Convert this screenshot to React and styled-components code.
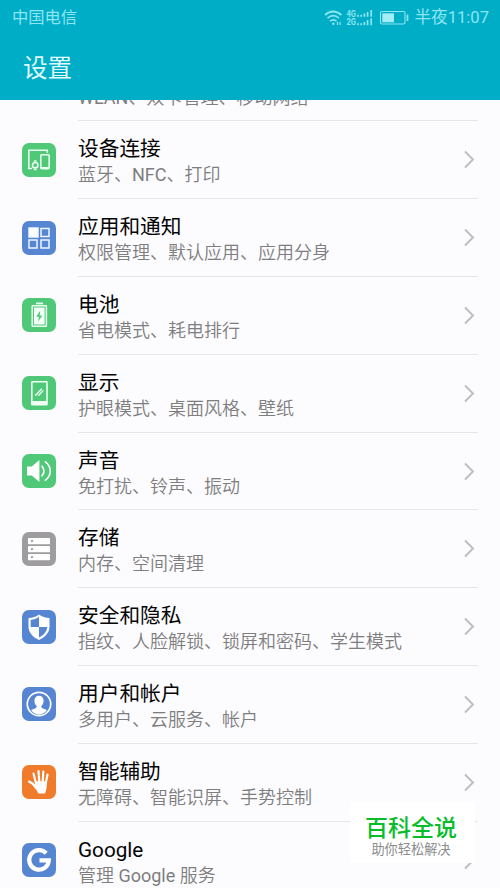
import styled, { createGlobalStyle } from "styled-components"

const GlobalStyle = createGlobalStyle`
    body {
        margin: 0;
        background: #fcfbfe;
        font-family: Roboto, "Noto Sans CJK SC", sans-serif;
    }
`;
const Screen = styled.div`
    width: 500px;
    height: 888px;
    overflow: hidden;
    background: #fcfbfe;
    display: flex;
    flex-direction: column;
    position: relative;
`;
const Header = styled.header`
    height: 100px;
    flex-shrink: 0;
    background: #00adc6;
    box-sizing: border-box;
`;
const StatusBar = styled.div`
    height: 35px;
    padding: 0 11px 0 12px;
    display: flex;
    align-items: center;
    justify-content: space-between;
    color: #8ce6f3;
`;
const Carrier = styled.span`
    font-size: 16.3px;
    line-height: 34px;
`;
const StatusIcons = styled.div`
    display: flex;
    align-items: center;
`;
const Clock = styled.span`
    font-size: 16.6px;
    line-height: 34px;
    margin-left: 4px;
    white-space: nowrap;
`;
const Title = styled.h1`
    margin: 0;
    padding-left: 23px;
    font-size: 24.6px;
    font-weight: 400;
    line-height: 67px;
    color: #dffbff;
`;
const Viewport = styled.main`
    flex: 1;
    min-height: 0;
    overflow: hidden;
`;
const List = styled.ul`
    list-style: none;
    margin: 0;
    padding: 0;
`;
const Row = styled.li`
    height: 77.8px;
    padding: 0 22px;
    display: flex;
`;
const IconBox = styled.div`
    width: 34px;
    height: 34px;
    margin: 21.4px 22px 0 0;
    flex-shrink: 0;
    border-radius: 7px;
    background: ${props => props.$color};

    svg {
        display: block;
    }
`;
const Content = styled.div`
    flex: 1;
    display: flex;
    justify-content: space-between;
    box-sizing: border-box;
    border-bottom: 1px solid #e6e5e8;
`;
const Name = styled.div`
    margin-top: 13px;
    font-size: 20.7px;
    line-height: 30px;
    color: #050505;
    white-space: nowrap;
`;
const Summary = styled.div`
    margin-top: -1px;
    font-family: Roboto, "Noto Sans CJK SC DemiLight", "Noto Sans CJK SC", sans-serif;
    font-size: 18px;
    line-height: 24px;
    color: #7e7e7e;
    white-space: nowrap;
`;
// tail of the entry that is scrolled under the header
const ScrolledRow = styled.li`
    height: 21.4px;
    box-sizing: border-box;
    margin: 0 22px 0 78px;
    display: flex;
    align-items: flex-start;
    border-bottom: 1px solid #e6e5e8;

    ${Summary} {
        margin-top: -14.4px;
    }
`;
const Arrow = styled.svg`
    flex-shrink: 0;
    margin: 29px 3px 0 0;
`;
const Badge = styled.div`
    position: absolute;
    left: 350px;
    top: 802px;
    width: 125px;
    height: 61px;
    background: #fff;
    text-align: center;
`;
const BadgeName = styled.div`
    margin: 13px 3px 0 0;
    font-size: 23px;
    font-weight: 500;
    line-height: 28px;
    color: #08bd2b;
`;
const BadgeText = styled.div`
    margin-right: 3px;
    font-size: 13.2px;
    line-height: 14px;
    color: #8b8b8b;
`;

const GREEN = "#4fc878";
const BLUE = "#5685d2";
const GREY = "#9e9c9e";
const ORANGE = "#f07b2a";

const items = [
    {
        name: "设备连接", summary: "蓝牙、NFC、打印", color: GREEN,
        icon: (
            <g fill="none" stroke="#e9fff0" strokeWidth="1.6">
                <path d="M6.8 25.5V7.3h18.5v2.5M6 25.5h4" />
                <rect x="18.8" y="11.8" width="8.4" height="14" rx="1" />
                <path d="M18.8 24.8h8.4" />
                <circle cx="13.2" cy="22.2" r="2.7" />
                <path d="M11.8 18h2.8M11.8 26.5h2.8" />
            </g>
        ),
    },
    {
        name: "应用和通知", summary: "权限管理、默认应用、应用分身", color: BLUE,
        icon: (
            <g fill="none" stroke="#eef5ff" strokeWidth="1.5">
                <rect x="7" y="7" width="9" height="9" fill="#fff" />
                <rect x="19" y="7.5" width="8" height="8" />
                <rect x="7" y="19" width="8" height="8" />
                <rect x="19" y="19" width="8" height="8" />
            </g>
        ),
    },
    {
        name: "电池", summary: "省电模式、耗电排行", color: GREEN,
        icon: (
            <g>
                <path d="M14 4.5h7v1.8h-7z" fill="#e9fff0" />
                <rect x="10.2" y="7.7" width="14.2" height="20.5" rx=".5" fill="none" stroke="#e9fff0" strokeWidth="1.5" />
                <path d="M12 9.5h10.6v17H12z" fill="#f4fff7" />
                <path d="M18.2 12.8l-4 6h2.7l-.6 4.8 4-6.2h-2.6z" fill={GREEN} />
            </g>
        ),
    },
    {
        name: "显示", summary: "护眼模式、桌面风格、壁纸", color: GREEN,
        icon: (
            <g fill="none" stroke="#effff4" strokeWidth="1.6">
                <rect x="9.8" y="5.8" width="15.2" height="23" rx=".6" />
                <path d="M9.8 26.8H25" strokeWidth="3.6" />
                <path d="M13.2 19.7l6.6-7M16.3 19.7l5-5.3" strokeWidth="1.3" />
            </g>
        ),
    },
    {
        name: "声音", summary: "免打扰、铃声、振动", color: GREEN,
        icon: (
            <g>
                <path d="M5 12.5h4.8L17.4 6v22l-7.6-6.5H5z" fill="#fff" />
                <path d="M20 12.2q3.8 4.8 0 9.6M23.4 7.8c6.5 5 6.5 13.4 0 18.4" fill="none" stroke="#fff" strokeWidth="1.7" strokeLinecap="round" />
            </g>
        ),
    },
    {
        name: "存储", summary: "内存、空间清理", color: GREY,
        icon: (
            <g>
                {[6, 14, 22].map(y => (
                    <g key={y}>
                        <rect x="6" y={y} width="22" height="6.2" rx=".7" fill="#fff" />
                        <circle cx="10" cy={y + 3.1} r="1.2" fill={GREY} />
                    </g>
                ))}
            </g>
        ),
    },
    {
        name: "安全和隐私", summary: "指纹、人脸解锁、锁屏和密码、学生模式", color: BLUE,
        icon: (
            <g>
                <path d="M17 4.5c3 2.3 6.3 3.3 10.5 3.5v8.5c0 6-4 10.3-10.5 13.5C10.5 26.8 6.5 22.5 6.5 16.5V8c4.2-.2 7.5-1.2 10.5-3.5z" fill="#fff" />
                <path d="M17 17h8.2c-.3 4.8-3.3 7.8-8.2 10.5zM17 17H8.7V9.9C12 9.5 14.5 8.7 17 7z" fill={BLUE} />
            </g>
        ),
    },
    {
        name: "用户和帐户", summary: "多用户、云服务、帐户", color: BLUE,
        icon: (
            <g>
                <circle cx="17" cy="17" r="11.7" fill="none" stroke="#fff" strokeWidth="1.7" />
                <path d="M17 8.8c-3 0-4.7 2-4.6 5 0 2.3.9 4 2.3 5.2.1 1.3-.4 1.9-1.6 2.4l-4 1.6C11 26 13.7 27.4 17 27.4s6-1.4 7.9-4.4l-4-1.6c-1.2-.5-1.7-1.1-1.6-2.4 1.4-1.2 2.3-2.9 2.3-5.2.1-3-1.6-5-4.6-5z" fill="#fff" />
            </g>
        ),
    },
    {
        name: "智能辅助", summary: "无障碍、智能识屏、手势控制", color: ORANGE,
        icon: (
            <g fill="none" stroke="#fff" strokeLinecap="round" strokeLinejoin="round">
                <path d="M13.9 18L11.5 8.6M17.3 17L16.5 6.2M20.7 17L21.3 6.5M23.6 19L25.5 9.6" strokeWidth="2.2" />
                <path d="M14.8 23.8L10.8 18.8 7 16.6" strokeWidth="2.3" />
                <path d="M13.7 17h10.5l-.4 6-1.3 4.8h-5.6L13.8 22z" fill="#fff" strokeWidth="1.5" />
            </g>
        ),
    },
    {
        name: "Google", summary: "管理 Google 服务", color: BLUE,
        icon: (
            <path d="M24.2 10.2A9.8 9.8 0 1 0 26.8 17.4h-9.3" fill="none" stroke="#fff" strokeWidth="4.2" />
        ),
    },
];

const SignalIcons = () => (
    <svg width="86" height="22" viewBox="0 0 86 22" fill="none" stroke="#8ce6f3">
        <path d="M1 8q8-7 16.5 0M3.5 11.2q5.7-5 11.5 0M6 14.2q3.3-2.8 6.5 0" strokeWidth="1.7" />
        <circle cx="9.3" cy="16.8" r="1.2" fill="#8ce6f3" stroke="none" />
        <path d="M13.5 14.7V18M16 14.7V18" strokeWidth="1.2" />
        <g fill="#8ce6f3" stroke="none" fontFamily="Roboto, sans-serif" fontSize="9" fontWeight="700">
            <text x="22.5" y="9.8" textLength="9.5" lengthAdjust="spacingAndGlyphs">4G</text>
            <text x="22.5" y="18.2" textLength="9.5" lengthAdjust="spacingAndGlyphs">2G</text>
        </g>
        <path d="M34 7.8v2M37.2 7.8v2M40.4 6.5v3.3M43.6 5v4.8M47.2 3v6.8M34 16.2v2M37.2 16.2v2M40.4 15v3.2M43.6 13v5.2M47.2 11.3v6.9" strokeWidth="1.7" />
        <rect x="56.5" y="4.5" width="24.5" height="12.5" rx="1.5" strokeWidth="1.1" />
        <path d="M58.3 6.3H70v9H58.3z" fill="#a4edf6" stroke="none" />
        <path d="M83.5 7.5V14" strokeWidth="1.7" />
    </svg>
);

const Item = ({ item }) => (
    <Row>
        <IconBox $color={item.color}>
            <svg width="34" height="34" viewBox="0 0 34 34">{item.icon}</svg>
        </IconBox>
        <Content>
            <div>
                <Name>{item.name}</Name>
                <Summary>{item.summary}</Summary>
            </div>
            <Arrow width="12" height="19" viewBox="0 0 12 19" fill="none" stroke="#bdbcbf" strokeWidth="1.9">
                <path d="M2 1.5l8 8-8 8" />
            </Arrow>
        </Content>
    </Row>
);

const App = () => {
    return (
        <>
            <GlobalStyle />
            <Screen>
                <Header>
                    <StatusBar>
                        <Carrier>中国电信</Carrier>
                        <StatusIcons>
                            <SignalIcons />
                            <Clock>半夜11:07</Clock>
                        </StatusIcons>
                    </StatusBar>
                    <Title>设置</Title>
                </Header>
                <Viewport>
                    <List>
                        <ScrolledRow>
                            <Summary>WLAN、双卡管理、移动网络</Summary>
                        </ScrolledRow>
                        {items.map(item => <Item key={item.name} item={item} />)}
                    </List>
                </Viewport>
                <Badge>
                    <BadgeName>百科全说</BadgeName>
                    <BadgeText>助你轻松解决</BadgeText>
                </Badge>
            </Screen>
        </>
    )
}

export default App
